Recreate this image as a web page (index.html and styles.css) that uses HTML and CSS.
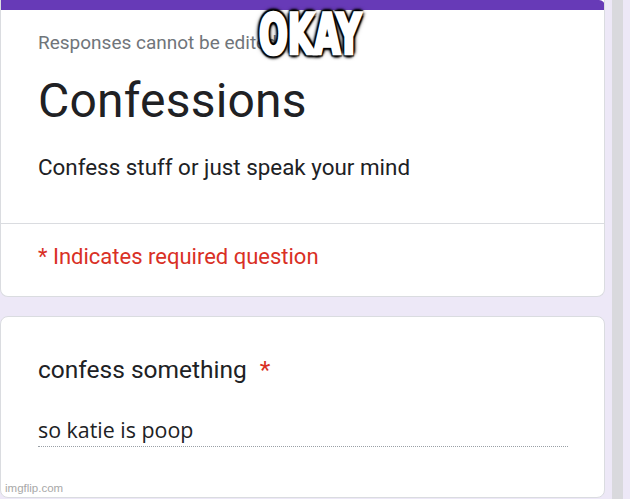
FILE: index.html
```html
<!DOCTYPE html>
<html>
<head>
<meta charset="utf-8">
<link rel="stylesheet" href="styles.css">
</head>
<body>
<div class="page">
  <main class="main">
    <section class="card card-head">
      <div class="bar"></div>
      <div class="head-body">
        <div class="note">Responses cannot be edited</div>
        <h1 class="title">Confessions</h1>
        <div class="desc">Confess stuff or just speak your mind</div>
      </div>
      <div class="req">* Indicates required question</div>
    </section>
    <section class="card card-q">
      <div class="q-title">confess something <span class="star">*</span></div>
      <div class="answer">so katie is poop</div>
      <div class="watermark">imgflip.com</div>
    </section>
  </main>
  <div class="gutter"></div>
  <div class="scroll"></div>
</div>
<div class="meme">OKAY</div>
</body>
</html>
```
FILE: styles.css
```css
html, body {
  margin: 0;
  padding: 0;
  height: 100%;
  overflow: hidden;
}
body {
  background: #ede8f7;
  font-family: Roboto, "Liberation Sans", sans-serif;
  color: #202124;
  position: relative;
}
.page {
  display: flex;
  height: 499px;
}
.main {
  width: 605px;
  display: flex;
  flex-direction: column;
  gap: 19px;
}
.gutter {
  width: 7px;
}
.scroll {
  width: 11px;
  background: #d9d9dd;
}
.card {
  background: #fff;
  border: 1px solid #dadce0;
  border-radius: 8px;
  box-sizing: border-box;
}
.card-head {
  height: 297px;
  border-top: none;
  border-radius: 0 0 8px 8px;
  display: flex;
  flex-direction: column;
  overflow: hidden;
}
.bar {
  height: 10px;
  background: #673ab7;
  margin: 0 -1px;
  border-top-right-radius: 6px;
}
.head-body {
  height: 214px;
  padding: 22px 0 0 37px;
  box-sizing: border-box;
  border-bottom: 1px solid #dadce0;
}
.note {
  font-size: 19px;
  color: #70757a;
  line-height: 22px;
}
.title {
  margin: 19px 0 0 0;
  font-weight: 400;
  font-size: 48px;
  line-height: 56px;
  color: #202124;
  letter-spacing: 0.2px;
}
.desc {
  margin-top: 24px;
  font-size: 22.4px;
  line-height: 28px;
  color: #202124;
}
.req {
  padding: 19px 0 0 37px;
  font-size: 22px;
  line-height: 28px;
  color: #d93025;
}
.card-q {
  height: 182px;
  padding: 38px 0 0 37px;
  position: relative;
}
.q-title {
  font-size: 24.5px;
  line-height: 30px;
  color: #202124;
}
.star {
  color: #d93025;
  margin-left: 7px;
}
.answer {
  margin-top: 31px;
  width: 530px;
  font-family: "Open Sans", "Noto Sans", sans-serif;
  font-size: 21.4px;
  line-height: 28px;
  color: #202124;
  padding-bottom: 2px;
  border-bottom: 1px dotted #9aa0a6;
}
.watermark {
  position: absolute;
  left: 4px;
  bottom: 3px;
  font-family: "Liberation Sans", Arial, sans-serif;
  font-size: 11.5px;
  color: #a8a8a8;
}
.meme {
  position: absolute;
  top: 5px;
  left: 250px;
  width: 120px;
  text-align: center;
  font-family: Impact, "DejaVu Sans Condensed", "DejaVu Sans", sans-serif;
  font-weight: 700;
  font-size: 38px;
  line-height: 40px;
  color: #fff;
  -webkit-text-stroke: 2.5px #fff;
  transform: scale(0.99, 1.45);
  transform-origin: top center;
  text-shadow: -2px -2px 1px #000, 2px -2px 1px #000, -2px 2px 1px #000, 2px 2px 1px #000, 0 3px 2px #000, 0 -3px 2px #000, 3px 0 2px #000, -3px 0 2px #000, 0 0 5px #000;
}
```
